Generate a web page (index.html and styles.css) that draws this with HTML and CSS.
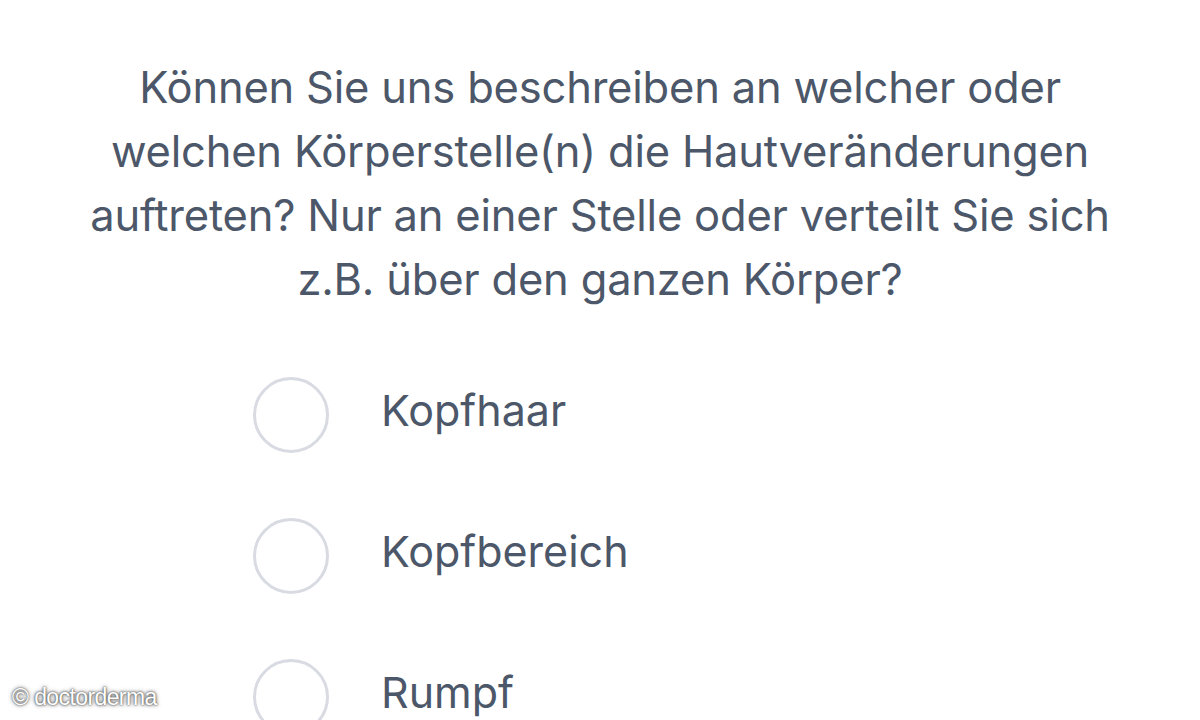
FILE: index.html
```html
<!DOCTYPE html>
<html lang="de">
<head>
  <meta charset="UTF-8">
  <meta name="viewport" content="width=device-width, initial-scale=1.0">
  <link rel="stylesheet" href="styles.css">
  <title>Fragebogen</title>
</head>
<body>
  <main class="question">
    <h1 class="question-title">Können Sie uns beschreiben an welcher oder welchen Körperstelle(n) die Hautveränderungen auftreten? Nur an einer Stelle oder verteilt Sie sich z.B. über den ganzen Körper?</h1>
    <ul class="options">
      <li class="option"><span class="radio"></span><span class="option-label">Kopfhaar</span></li>
      <li class="option"><span class="radio"></span><span class="option-label">Kopfbereich</span></li>
      <li class="option"><span class="radio"></span><span class="option-label">Rumpf</span></li>
    </ul>
  </main>
  <div class="watermark">© doctorderma</div>
</body>
</html>
```

FILE: styles.css
```css
html, body {
  margin: 0;
  height: 100%;
  overflow: hidden;
}
body {
  font-family: Inter, Roboto, sans-serif;
  background-color: #ffffff;
  color: #4c5769;
}
.question {
  padding-top: 55px;
}
.question-title {
  margin: 0 auto;
  width: 1080px;
  font-size: 43.5px;
  font-weight: 400;
  line-height: 64px;
  text-align: center;
  letter-spacing: -0.2px;
}
.options {
  list-style: none;
  margin: 33px 0 0 0;
  padding: 0 0 0 253px;
}
.option {
  display: flex;
  align-items: center;
  height: 141px;
}
.radio {
  width: 70px;
  height: 70px;
  border: 3px solid #d8dbe2;
  border-radius: 50%;
  flex-shrink: 0;
}
.option-label {
  margin: 0 0 8px 52px;
  font-size: 43px;
  line-height: 1;
}
.watermark {
  position: absolute;
  left: 12px;
  bottom: 9px;
  font-family: "Liberation Sans", Arial, sans-serif;
  font-size: 23px;
  color: #ffffff;
  letter-spacing: -0.6px;
  text-shadow: 0 0 2px #333, 0 0 4px #555;
}
```
